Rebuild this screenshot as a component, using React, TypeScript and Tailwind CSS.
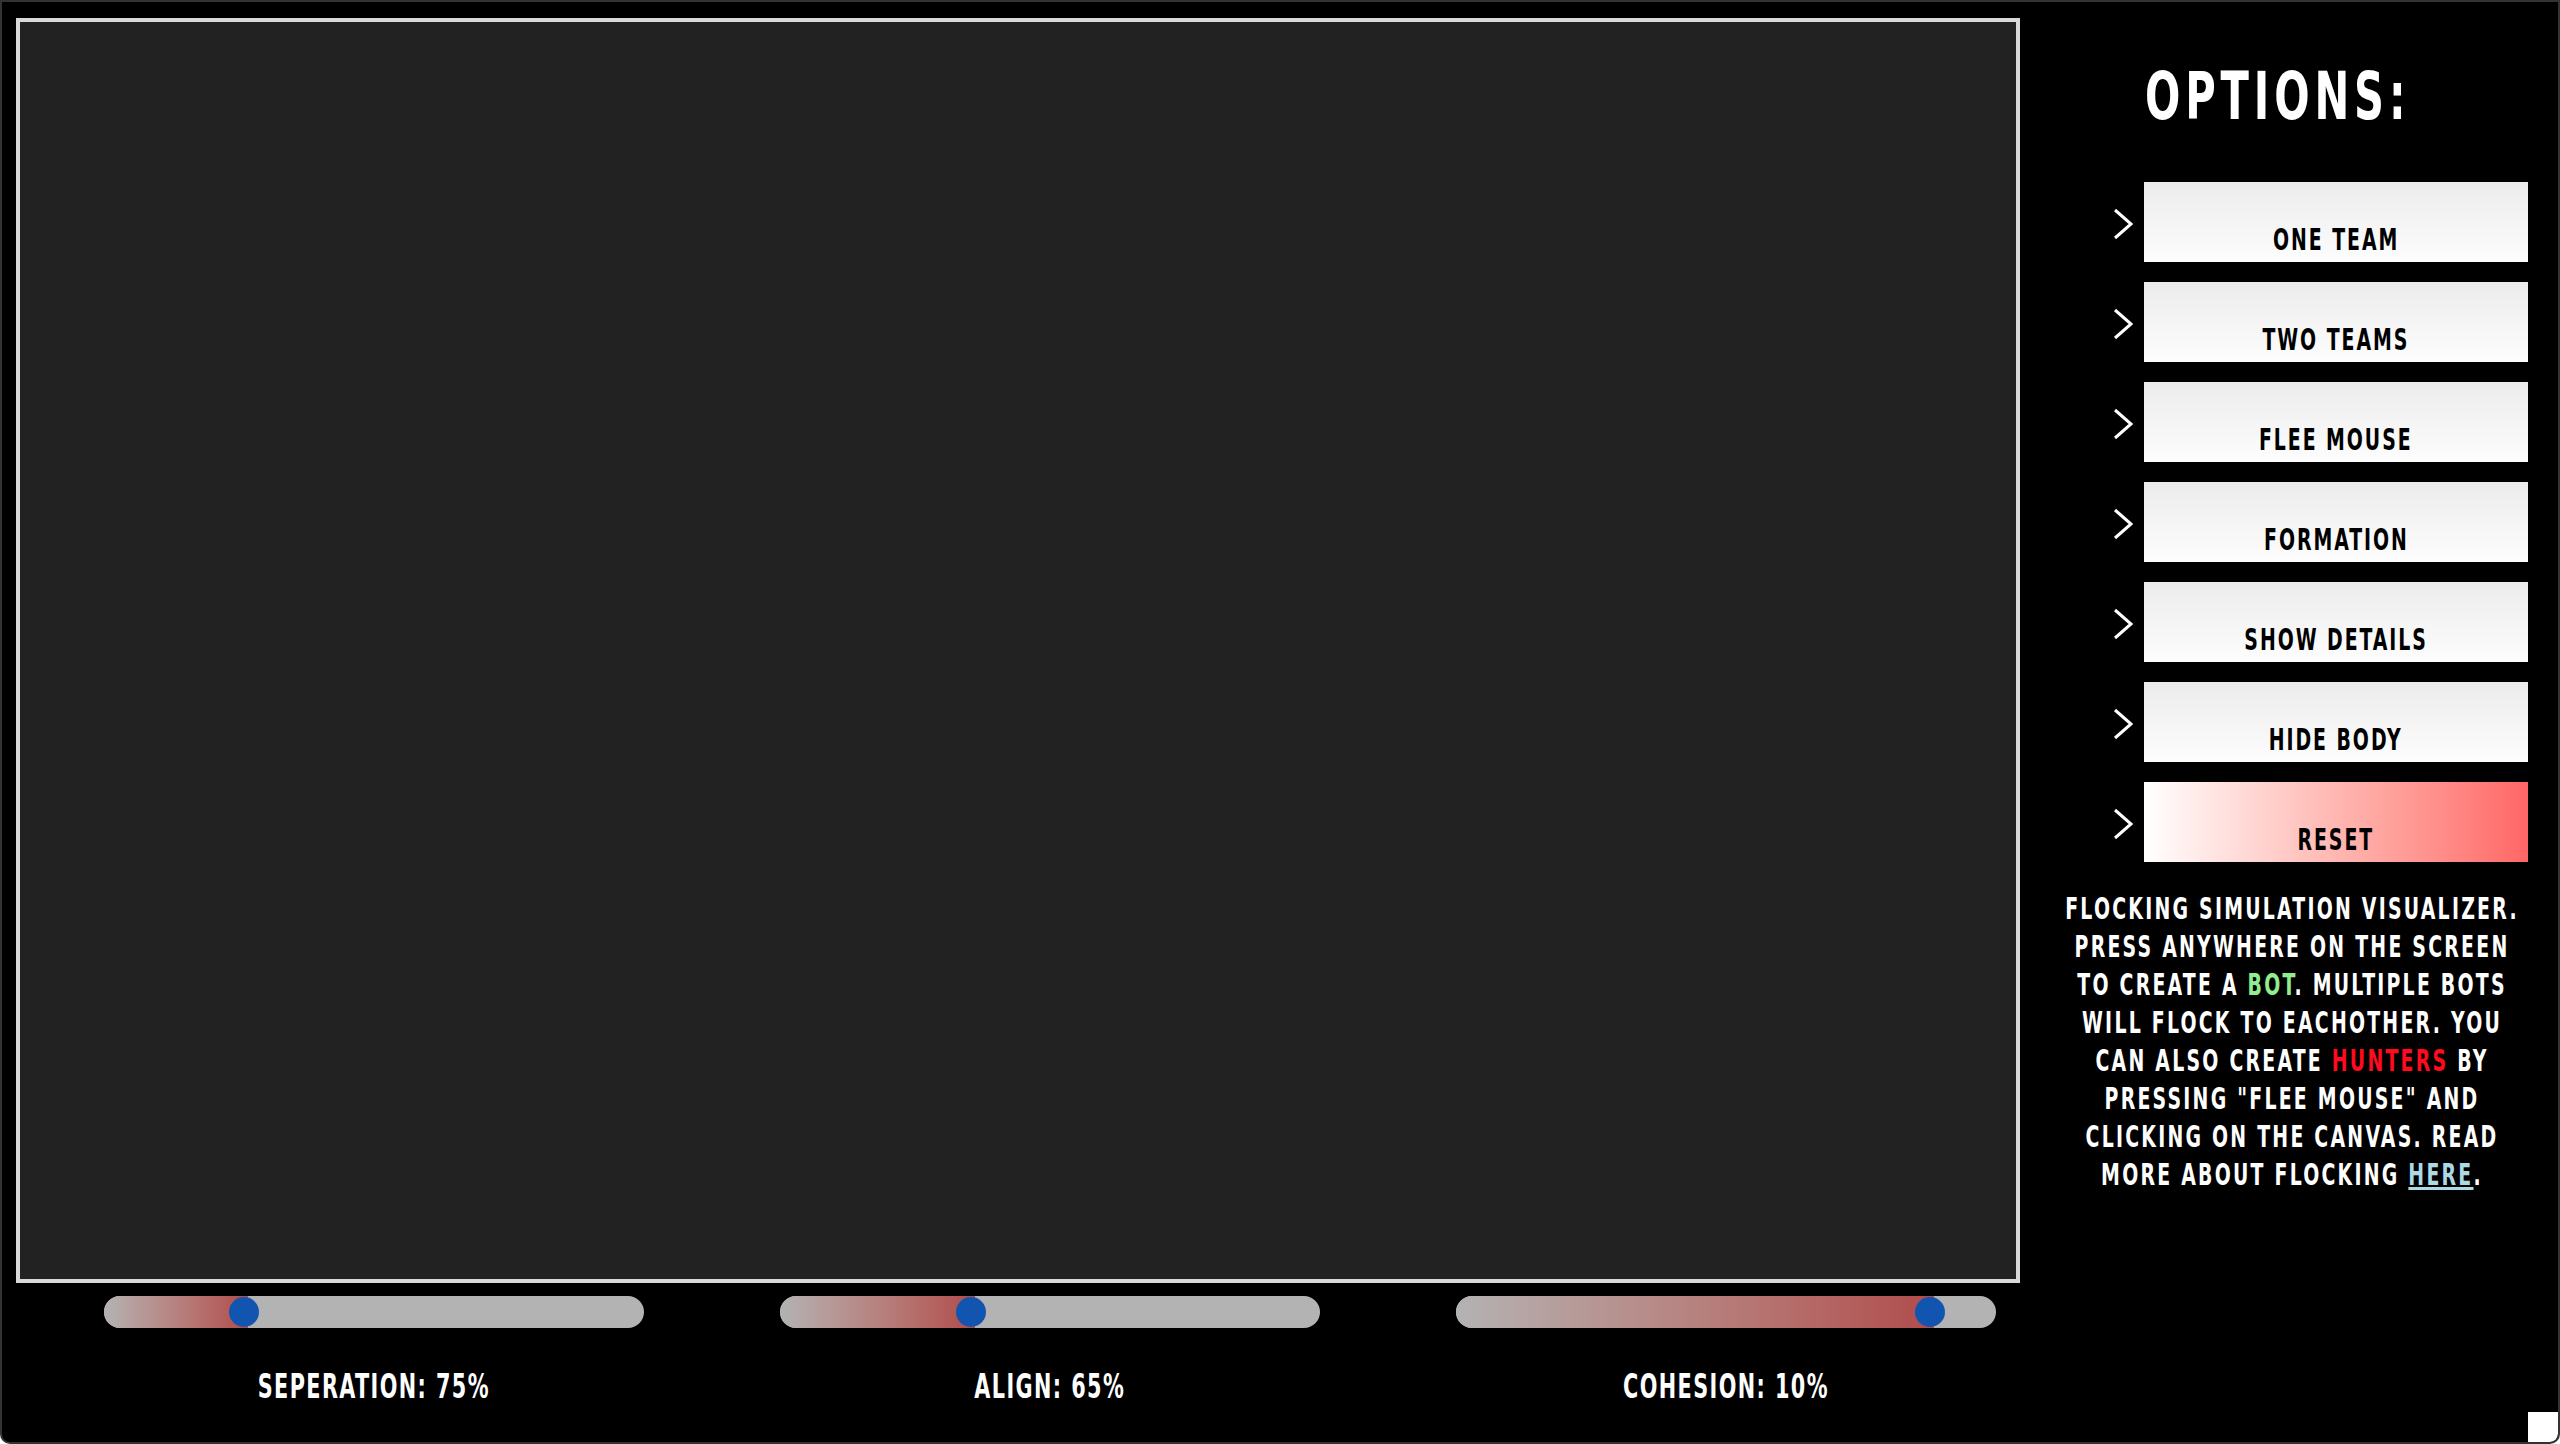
import React from 'react';

const options = ['One Team', 'Two Teams', 'Flee Mouse', 'Formation', 'Show Details', 'Hide Body'];

const sliders = [
  { label: 'Seperation', value: 75 },
  { label: 'Align', value: 65 },
  { label: 'Cohesion', value: 10 },
];

const Chevron = () => (
  <svg className="mt-[4px] shrink-0" width="20" height="32" viewBox="0 0 20 32" fill="none">
    <polyline points="2,2 18,16 2,30" stroke="white" strokeWidth="3" />
  </svg>
);

// track is 540 wide, thumb 30; the thumb runs the other way round from the value
const Slider = ({ label, value }: { label: string; value: number }) => {
  const center = 11.5 + ((100 - value) / 100) * 514;
  return (
    <div className="w-[540px] flex flex-col items-center">
      <div className="relative w-[540px] h-[32px] rounded-full bg-[#b3b3b3] overflow-hidden">
        <div
          className="absolute left-0 top-0 bottom-0 bg-linear-to-r from-[#b3b3b3] to-[#b04c4c]"
          style={{ width: center + 4 }}
        />
        <div
          className="absolute top-[1px] w-[30px] h-[30px] rounded-full bg-[#1155b0]"
          style={{ left: center - 15 }}
        />
      </div>
      <p className="mt-[42px] text-[33px] leading-[33px] text-white uppercase whitespace-nowrap">
        <span className="inline-block scale-x-[0.7] tracking-[2px]">
          {label}: {value}%
        </span>
      </p>
    </div>
  );
};

const OptionButton = ({ label, reset }: { label: string; reset?: boolean }) => (
  <div className="flex items-center gap-[11px]">
    <Chevron />
    <button
      className={`w-[384px] h-[80px] flex items-end justify-center pb-[7px] text-black text-[30px] leading-[30px] uppercase whitespace-nowrap ${
        reset ? 'bg-linear-to-r from-white to-[#ff6666]' : 'bg-linear-to-b from-[#ececec] to-[#fdfdfd]'
      }`}
    >
      <span className="inline-block scale-x-[0.7] tracking-[2.8px]">{label}</span>
    </button>
  </div>
);

export default function App() {
  return (
    <div className="relative w-[2560px] h-[1444px] bg-black border-2 border-[#333333] rounded-b-[10px] overflow-hidden flex font-['DejaVu_Sans_Condensed','DejaVu_Sans',sans-serif] font-bold">
      {/* canvas + sliders */}
      <div className="w-[2018px] shrink-0 flex flex-col pl-[14px] pt-[16px]">
        <div className="w-[2004px] h-[1265px] border-4 border-[#d9d9d9] bg-[#222222]" />
        <div className="mt-[13px] flex gap-[136px] pl-[88px]">
          {sliders.map((s) => (
            <Slider key={s.label} label={s.label} value={s.value} />
          ))}
        </div>
      </div>

      {/* options panel */}
      <div className="flex-1 min-w-0 flex flex-col pt-[62px]">
        <h1 className="pl-[125px] text-[66px] leading-[66px] text-white whitespace-nowrap">
          <span className="inline-block origin-left scale-x-[0.7] tracking-[7px]">OPTIONS:</span>
        </h1>

        <div className="mt-[52px] flex flex-col gap-[20px] pl-[93px]">
          {options.map((o) => (
            <OptionButton key={o} label={o} />
          ))}
          <OptionButton label="Reset" reset />
        </div>

        <div className="mt-[28px] pl-[6px] flex justify-center">
          <p className="w-max shrink-0 scale-x-[0.7] text-center text-white text-[30px] leading-[38px] tracking-[3.2px] whitespace-nowrap">
            FLOCKING SIMULATION VISUALIZER.
            <br />
            PRESS ANYWHERE ON THE SCREEN
            <br />
            TO CREATE A <span className="text-[#90ee90]">BOT</span>. MULTIPLE BOTS
            <br />
            WILL FLOCK TO EACHOTHER. YOU
            <br />
            CAN ALSO CREATE <span className="text-[#ff0a1e]">HUNTERS</span> BY
            <br />
            PRESSING "FLEE MOUSE" AND
            <br />
            CLICKING ON THE CANVAS. READ
            <br />
            MORE ABOUT FLOCKING{' '}
            <a href="#" className="text-[#add8e6] underline">
              HERE
            </a>
            .
          </p>
        </div>
      </div>

      <div className="absolute right-0 bottom-0 w-[30px] h-[30px] bg-white rounded-br-[8px]" />
    </div>
  );
}
